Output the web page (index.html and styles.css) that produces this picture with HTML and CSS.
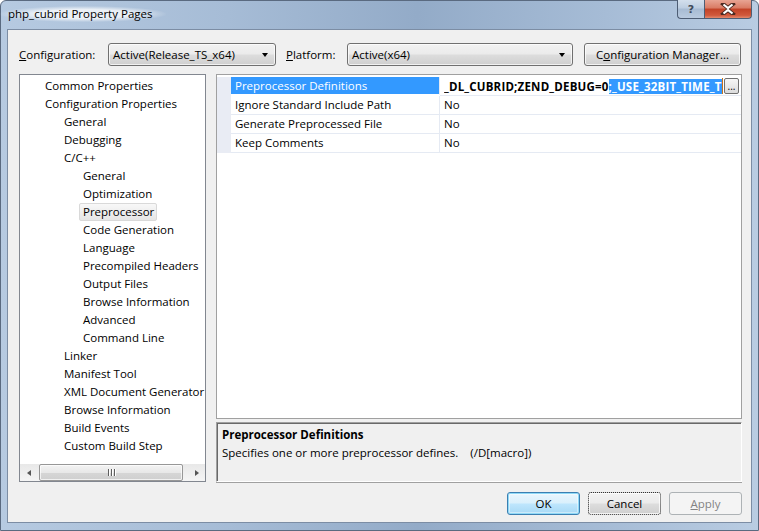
FILE: index.html
```html
<!DOCTYPE html>
<html>
<head>
<meta charset="utf-8">
<link rel="stylesheet" href="styles.css">
</head>
<body>
<div class="window">
  <div class="titlebar">
    <span class="title">php_cubrid Property Pages</span>
    <div class="caption-btns">
      <div class="cbtn help">?</div>
      <div class="cbtn close">
        <svg width="16" height="12" viewBox="0 0 16 12"><path d="M3 1 L8 5 L13 1 M3 11 L8 7 L13 11" stroke="#4a2a22" stroke-width="4" fill="none" stroke-linecap="square"/><path d="M3.5 1.5 L8 5.2 L12.5 1.5 M3.5 10.5 L8 6.8 L12.5 10.5" stroke="#fff" stroke-width="2.2" fill="none"/></svg>
      </div>
    </div>
  </div>
  <div class="client">
    <div class="config-row">
      <span class="lbl lbl1"><u>C</u>onfiguration:</span>
      <div class="combo combo1"><span>Active(Release_TS_x64)</span><i class="arrow"></i></div>
      <span class="lbl lbl2"><u>P</u>latform:</span>
      <div class="combo combo2"><span>Active(x64)</span><i class="arrow"></i></div>
      <div class="btn cm">C<u>o</u>nfiguration Manager...</div>
    </div>
    <div class="main">
      <div class="tree">
        <div class="tree-items">
          <div class="ti l1">Common Properties</div>
          <div class="ti l1">Configuration Properties</div>
          <div class="ti l2">General</div>
          <div class="ti l2">Debugging</div>
          <div class="ti l2">C/C++</div>
          <div class="ti l3">General</div>
          <div class="ti l3">Optimization</div>
          <div class="ti l3"><span class="sel">Preprocessor</span></div>
          <div class="ti l3">Code Generation</div>
          <div class="ti l3">Language</div>
          <div class="ti l3">Precompiled Headers</div>
          <div class="ti l3">Output Files</div>
          <div class="ti l3">Browse Information</div>
          <div class="ti l3">Advanced</div>
          <div class="ti l3">Command Line</div>
          <div class="ti l2">Linker</div>
          <div class="ti l2">Manifest Tool</div>
          <div class="ti l2">XML Document Generator</div>
          <div class="ti l2">Browse Information</div>
          <div class="ti l2">Build Events</div>
          <div class="ti l2">Custom Build Step</div>
        </div>
        <div class="hscroll">
          <div class="sb-btn"><i class="tri-l"></i></div>
          <div class="sb-track"><div class="thumb"><span class="grip"><i></i><i></i><i></i></span></div></div>
          <div class="sb-btn"><i class="tri-r"></i></div>
        </div>
      </div>
      <div class="right">
        <div class="grid">
          <div class="row">
            <div class="margin"></div>
            <div class="name selected">Preprocessor Definitions</div>
            <div class="value edit">
              <div class="edit-text"><b>_DL_CUBRID;ZEND_DEBUG=0</b><b class="hl">;_USE_32BIT_TIME_T</b></div>
              <div class="caret"></div>
              <div class="dots">...</div>
            </div>
          </div>
          <div class="row">
            <div class="margin"></div>
            <div class="name">Ignore Standard Include Path</div>
            <div class="value">No</div>
          </div>
          <div class="row">
            <div class="margin"></div>
            <div class="name">Generate Preprocessed File</div>
            <div class="value">No</div>
          </div>
          <div class="row">
            <div class="margin"></div>
            <div class="name">Keep Comments</div>
            <div class="value">No</div>
          </div>
          <div class="grid-rest"></div>
        </div>
        <div class="desc">
          <div class="desc-title">Preprocessor Definitions</div>
          <div class="desc-text">Specifies one or more preprocessor defines.<span class="sw">(/D[macro])</span></div>
        </div>
      </div>
    </div>
    <div class="buttons">
      <div class="btn ok">OK</div>
      <div class="btn cancel">Cancel</div>
      <div class="btn apply"><u>A</u>pply</div>
    </div>
  </div>
</div>
</body>
</html>
```
FILE: styles.css
```css
html, body {
  margin: 0;
  padding: 0;
}
body {
  width: 759px;
  height: 531px;
  overflow: hidden;
  font-family: "Open Sans", "Noto Sans", sans-serif;
  font-size: 11.5px;
  color: #000;
}
.window {
  width: 759px;
  height: 531px;
  box-sizing: border-box;
  background: linear-gradient(90deg, #b6cae1 0%, #a6bcd6 30%, #93abc8 55%, #a6bcd6 80%, #b9cce2 100%);
  border: 1px solid #5a6a80;
  border-radius: 6px 6px 0 0;
  display: flex;
  flex-direction: column;
}
.titlebar {
  height: 28px;
  display: flex;
  justify-content: space-between;
  align-items: flex-start;
  padding-left: 7px;
}
.title {
  margin-top: 5px;
  font-size: 11.5px;
  line-height: 16px;
  color: #000;
  background: radial-gradient(ellipse at center, rgba(255,255,255,0.75) 40%, rgba(255,255,255,0) 72%);
  margin-left: -8px;
  padding-left: 8px;
  padding-right: 14px;
}
.caption-btns {
  display: flex;
  margin-right: 6px;
  margin-top: -1px;
}
.cbtn {
  height: 19px;
  box-sizing: border-box;
  border: 1px solid #4d5d74;
  border-top: none;
  display: flex;
  align-items: center;
  justify-content: center;
}
.help {
  width: 27px;
  border-radius: 0 0 0 4px;
  border-right: none;
  background: linear-gradient(#d3dfec 0%, #bccde0 45%, #a7bbd3 50%, #b9cadf 100%);
  color: #3f4a5a;
  font-family: "DejaVu Sans", sans-serif;
  font-size: 11px;
  font-weight: bold;
}
.close {
  width: 48px;
  border-radius: 0 0 4px 0;
  background: linear-gradient(#e8a493 0%, #d97a63 45%, #c24227 50%, #d1593c 85%, #e38a6e 100%);
}
.client {
  margin: 0 6px 0 6px;
  height: 494px;
  box-sizing: border-box;
  border: 1px solid #7c8da4;
  background: #f0f0f0;
  padding: 13px 9px 0 11px;
}
.config-row {
  display: flex;
  align-items: center;
  height: 23px;
}
.lbl {
  line-height: 23px;
}
.lbl1 { width: 89px; }
.lbl2 { width: 61px; margin-left: 10px; }
.combo {
  height: 23px;
  box-sizing: border-box;
  border: 1px solid #707070;
  border-radius: 3px;
  background: linear-gradient(#f2f2f2 0%, #ebebeb 48%, #dddddd 52%, #cfcfcf 100%);
  box-shadow: inset 0 0 0 1px rgba(255,255,255,0.7);
  display: flex;
  align-items: center;
  justify-content: space-between;
  padding: 0 7px 0 4px;
}
.combo1 { width: 168px; }
.combo2 { width: 226px; }
.arrow {
  width: 0;
  height: 0;
  border-left: 3.5px solid transparent;
  border-right: 3.5px solid transparent;
  border-top: 4px solid #000;
}
.btn {
  height: 23px;
  box-sizing: border-box;
  border: 1px solid #707070;
  border-radius: 3px;
  background: linear-gradient(#f2f2f2 0%, #ebebeb 48%, #dddddd 52%, #cfcfcf 100%);
  box-shadow: inset 0 0 0 1px rgba(255,255,255,0.75);
  display: flex;
  align-items: center;
  justify-content: center;
}
.cm {
  width: 157px;
  margin-left: 11px;
}
.main {
  display: flex;
  margin-top: 8px;
  height: 408px;
  gap: 10px;
}
.tree {
  width: 187px;
  box-sizing: border-box;
  border: 1px solid #828790;
  background: #fff;
  display: flex;
  flex-direction: column;
}
.tree-items {
  flex: 1;
  padding-top: 2px;
  overflow: hidden;
  white-space: nowrap;
}
.ti {
  height: 18px;
  line-height: 18px;
}
.l1 { padding-left: 25px; }
.l2 { padding-left: 44px; }
.l3 { padding-left: 63px; }
.sel {
  display: inline-block;
  height: 18px;
  line-height: 16px;
  box-sizing: border-box;
  margin-left: -4px;
  padding: 0 2px 0 3px;
  border: 1px solid #d9d9d9;
  border-radius: 2px;
  background: linear-gradient(#f8f8f8, #e5e5e5);
}
.hscroll {
  height: 17px;
  display: flex;
  background: linear-gradient(#e8e8e8, #f5f5f5);
}
.sb-btn {
  width: 17px;
  display: flex;
  align-items: center;
  justify-content: center;
}
.tri-l {
  border-top: 3.5px solid transparent;
  border-bottom: 3.5px solid transparent;
  border-right: 4px solid #555;
}
.tri-r {
  border-top: 3.5px solid transparent;
  border-bottom: 3.5px solid transparent;
  border-left: 4px solid #555;
}
.sb-track {
  flex: 1;
  padding: 0 5px 0 2px;
  display: flex;
}
.thumb {
  flex: 1;
  box-sizing: border-box;
  border: 1px solid #979797;
  border-radius: 2px;
  background: linear-gradient(#f3f3f3 0%, #e8e8e8 50%, #d6d6d6 51%, #cfcfcf 100%);
  box-shadow: inset 0 0 0 1px rgba(255,255,255,0.7);
  display: flex;
  align-items: center;
  justify-content: center;
}
.grip {
  display: flex;
  gap: 2px;
}
.grip i {
  width: 1px;
  height: 7px;
  background: #5e5e5e;
  box-shadow: 1px 0 0 #fff;
}
.right {
  flex: 1;
  display: flex;
  flex-direction: column;
}
.grid {
  height: 345px;
  box-sizing: border-box;
  border: 1px solid #a0a0a0;
  background: #fff;
  padding-top: 2px;
  display: flex;
  flex-direction: column;
}
.row {
  display: flex;
  height: 19px;
}
.margin {
  width: 14px;
  background: #e9ecf4;
}
.name {
  width: 209px;
  box-sizing: border-box;
  padding-left: 4px;
  line-height: 18px;
  border-bottom: 1px solid #e5eaf3;
  border-right: 1px solid #e5eaf3;
  white-space: nowrap;
  overflow: hidden;
}
.name.selected {
  background: #3399ff;
  color: #fff;
  height: 18px;
  border-bottom: 1px solid #fff;
}
.value {
  flex: 1;
  box-sizing: border-box;
  padding-left: 4px;
  line-height: 18px;
  border-bottom: 1px solid #e5eaf3;
  white-space: nowrap;
  overflow: hidden;
}
.value.edit {
  display: flex;
  align-items: center;
  padding-right: 1px;
}
.edit-text {
  width: 278px;
  overflow: hidden;
  white-space: nowrap;
  line-height: 17px;
  letter-spacing: 0.2px;
}
.edit-text b { font-weight: 700; }
.hl {
  background: #3399ff;
  color: #fff;
}
.caret {
  width: 1px;
  height: 16px;
  background: #c8731c;
}
.dots {
  width: 15px;
  height: 16px;
  margin-left: 1px;
  box-sizing: border-box;
  border: 1px solid #707070;
  border-radius: 2px;
  background: linear-gradient(#f6f6f6, #dcdcdc);
  font-size: 10px;
  line-height: 14px;
  text-align: center;
  color: #000;
}
.grid-rest {
  flex: 1;
}
.desc {
  margin-top: 3px;
  flex: 1;
  box-sizing: border-box;
  border-top: 1px solid #a0a0a0;
  border-left: 1px solid #a0a0a0;
  border-right: 1px solid #fff;
  border-bottom: 1px solid #fff;
  box-shadow: inset 1px 1px 0 #696969, 0 1px 0 #a0a0a0;
  padding: 3px 0 0 5px;
}
.desc-title {
  font-weight: 700;
  line-height: 18px;
}
.desc-text {
  line-height: 18px;
}
.sw {
  margin-left: 12px;
}
.buttons {
  display: flex;
  justify-content: flex-end;
  gap: 8px;
  margin-top: 10px;
}
.ok, .cancel, .apply {
  width: 73px;
}
.ok {
  border-color: #3c7fb1;
  box-shadow: inset 0 0 0 1px #8fd9f7, inset 0 0 0 2px rgba(255,255,255,0.4);
  background: linear-gradient(#eaf6fd 0%, #d9f0fc 48%, #bee6fd 52%, #a7d9f5 100%);
}
.cancel {
  border-style: dotted;
  border-color: #333;
}
.apply {
  border-color: #adb2b5;
  background: #f4f4f4;
  box-shadow: none;
  color: #838383;
}
```
